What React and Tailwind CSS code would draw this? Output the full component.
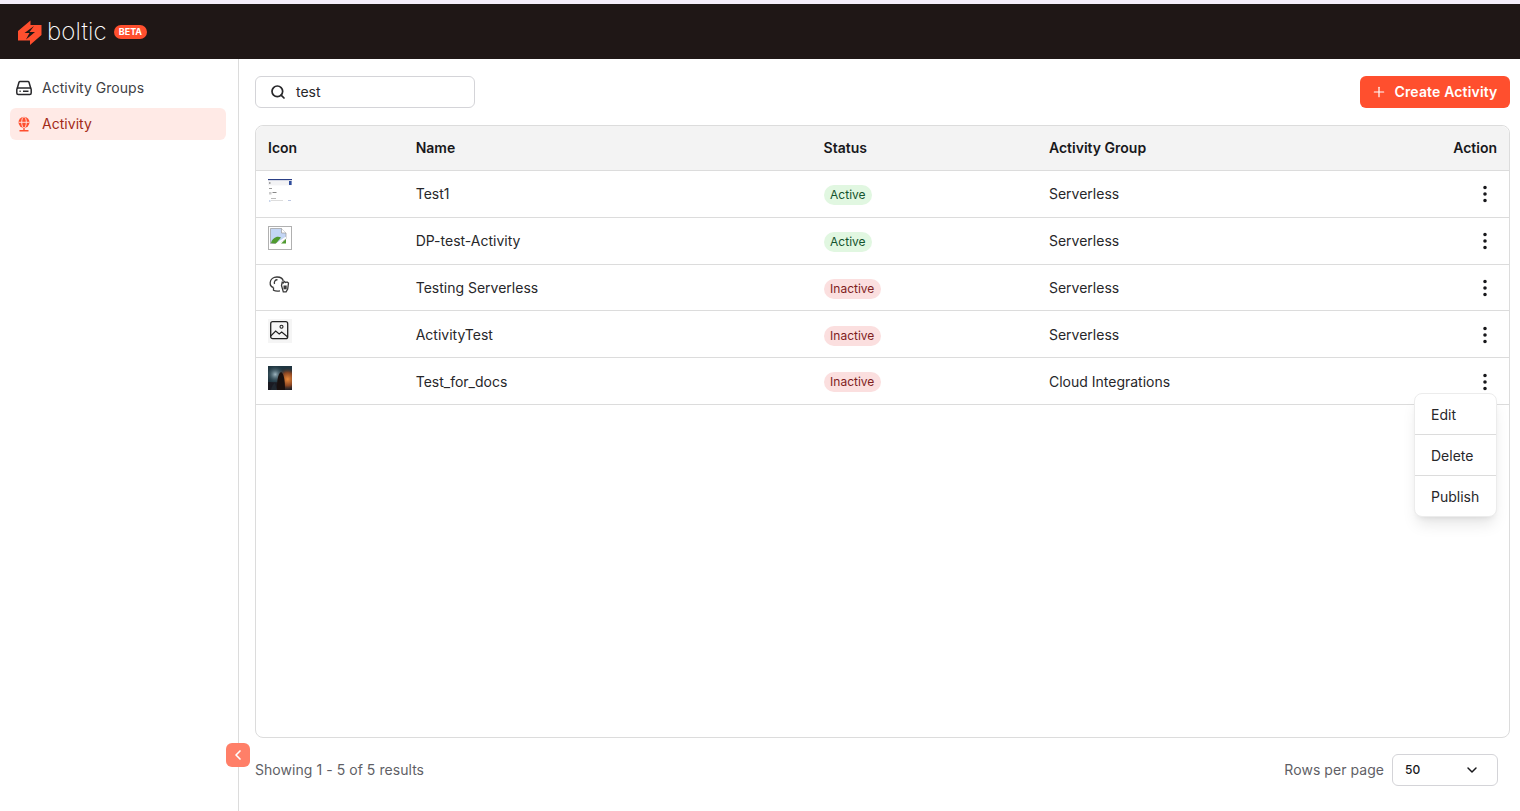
import React from "react";
import { Search, Plus, ChevronDown, ChevronLeft, EllipsisVertical } from "lucide-react";

const rows = [
  { name: "Test1", status: "Active", group: "Serverless", icon: <ThumbShot /> },
  { name: "DP-test-Activity", status: "Active", group: "Serverless", icon: <ThumbBroken /> },
  { name: "Testing Serverless", status: "Inactive", group: "Serverless", icon: <ThumbHead /> },
  { name: "ActivityTest", status: "Inactive", group: "Serverless", icon: <ThumbImage /> },
  { name: "Test_for_docs", status: "Inactive", group: "Cloud Integrations", icon: <ThumbDark /> },
];

function ThumbShot() {
  return (
    <svg width="24" height="24" viewBox="0 0 24 24">
      <rect width="24" height="24" fill="#fff" />
      <rect x="0" y="0" width="24" height="1.4" fill="#2b3f86" />
      <rect x="0" y="1.4" width="24" height="5" fill="#f3f3f5" />
      <rect x="21" y="2" width="2.6" height="4" fill="#2f4d9c" />
      <rect x="1" y="3.5" width="1.5" height="1" fill="#555" />
      <rect x="1" y="9" width="3" height="1" fill="#999" />
      <rect x="1" y="13" width="2.5" height="2.5" fill="#ccc" />
      <rect x="4.5" y="13" width="4" height="1" fill="#888" />
      <rect x="3" y="19" width="5" height="1" fill="#bbb" />
      <rect x="3" y="21" width="12" height="1" fill="#ddd" />
      <rect x="1" y="21" width="1.5" height="2" fill="#c9d5ea" />
      <rect x="20" y="21" width="3" height="1" fill="#bcc6e0" />
    </svg>
  );
}

function ThumbBroken() {
  return (
    <svg width="24" height="24" viewBox="0 0 24 24">
      <rect x="0.5" y="0.5" width="23" height="23" fill="#fff" stroke="#b0b0b0" />
      <path d="M2.500 2.500h11l4.500 4.500v6l-9 4.500H2.500z" fill="#c3d6f5" stroke="#9a9a9a" strokeWidth="0.7" />
      <path d="M13.500 2.500v4.500h4.500" fill="#fff" stroke="#9a9a9a" strokeWidth="0.7" />
      <path d="M3 17c1.500-5 6-7.500 10-5.500l-5 6z" fill="#4f9a2f" />
      <path d="M13 17.500l5-4.500v4.500z" fill="#4f9a2f" />
      <path d="M8 18.500l10-7" stroke="#fff" strokeWidth="1.600" />
    </svg>
  );
}

function ThumbHead() {
  return (
    <svg width="24" height="24" viewBox="0 0 24 24" fill="none" stroke="#3a3a3a" strokeWidth="1.300">
      <path d="M5.500 15.500C3.500 15 2 13 2.200 10.500 2.400 7 5.500 5 9 5c3.500 0 6 2 6.300 4.500" />
      <path d="M5.500 15.500v2.800c1.500.8 4 1 6.500.6" />
      <path d="M6.500 12c-.8-2.500 1-4.500 3-4.200" />
      <path d="M13.500 13.500l.7-3.200 1.300.6.800-1.400 1.400 1 1.300-.6 1.500 1.200-.8 6-1.600 2.800h-2.800z" fill="#fff" />
      <path d="M15.500 13.500h3.200v3.800h-3.200z" fill="#3a3a3a" stroke="none" />
    </svg>
  );
}

function ThumbImage() {
  return (
    <svg width="24" height="24" viewBox="0 0 24 24" fill="none">
      <rect width="24" height="24" fill="#f5f5f5" />
      <rect x="2.700" y="2.700" width="17" height="17" rx="2" stroke="#222" strokeWidth="1.300" />
      <circle cx="13.500" cy="7.700" r="1.500" stroke="#222" strokeWidth="1.100" />
      <path d="M2.700 17l5-5 3.500 3 2.500-2 6 5" stroke="#222" strokeWidth="1.100" />
    </svg>
  );
}

function ThumbDark() {
  return (
    <svg width="24" height="24" viewBox="0 0 24 24">
      <defs>
        <radialGradient id="fire" cx="0.82" cy="0.55" r="0.5">
          <stop offset="0" stopColor="#e8893a" />
          <stop offset="0.55" stopColor="#8a4522" />
          <stop offset="1" stopColor="#24303a" stopOpacity="0" />
        </radialGradient>
        <radialGradient id="glow" cx="0.3" cy="0.35" r="0.4">
          <stop offset="0" stopColor="#9fb6c0" />
          <stop offset="1" stopColor="#24404c" stopOpacity="0" />
        </radialGradient>
      </defs>
      <rect width="24" height="24" fill="#1f3540" />
      <rect y="16" width="24" height="8" fill="#1a1a22" />
      <rect width="24" height="24" fill="url(#fire)" />
      <rect width="24" height="24" fill="url(#glow)" />
      <path d="M9 24c0-8 .5-16 4-18 3 1 4 9 4 18z" fill="#1a100e" />
      <path d="M3 24c1-4 2-6 4-7l2 7z" fill="#20272f" />
    </svg>
  );
}

function StatusBadge({ status }) {
  const active = status === "Active";
  return (
    <span
      className={
        "inline-flex h-5 items-center rounded-full px-[6.500px] text-xs " +
        (active ? "bg-[#e1f7e1] text-[#14532d]" : "bg-[#fbdfdf] text-[#7f1d1d]")
      }
    >
      {status}
    </span>
  );
}

export default function App() {
  return (
    <div
      className="flex h-[811px] w-[1520px] flex-col overflow-hidden bg-white text-[#27272a]"
      style={{ fontFamily: "Inter, 'Liberation Sans', sans-serif" }}
    >
      <div className="h-1 bg-[#f4eefa]" />
      <header className="flex h-[55px] items-center bg-[#1f1716] pl-[17px]">
        <svg width="25" height="25" viewBox="0 0 25 25" className="mt-[1px]">
          <path d="M13.500 0.500V5H24.500V15L13 25V20.500H1V11z" fill="#ff4f2e" />
          <path d="M17 6L7.500 13H12.500L9 19.500L18 12H12.500z" fill="#1f1716" />
        </svg>
        <span className="ml-[5px] text-[24px] leading-none font-extralight tracking-[0.1px] text-white">boltic</span>
        <span className="ml-[7px] flex h-[14px] items-center rounded-full bg-[#ff4f2e] px-[5px] text-[9px] font-bold text-white">
          BETA
        </span>
      </header>

      <div className="flex min-h-0 flex-1">
        <aside className="relative w-[239px] shrink-0 border-r border-[#dcdcdc] pt-[13px] pr-3 pl-[10px]">
          <div className="flex h-8 items-center gap-[10px] px-[6px] text-sm tracking-[0.03px] text-[#3f3f46]">
            <svg width="16" height="16" viewBox="0 0 16 16" fill="none" stroke="#27272a" strokeWidth="1.500">
              <path d="M1.200 8.500L3 2.300a1.200 1.200 0 0 1 1.100-.8h7.800a1.200 1.200 0 0 1 1.100.8l1.800 6.200" />
              <rect x="0.800" y="8" width="14.400" height="6.500" rx="1.500" />
              <path d="M3.500 11.200h1.200M7 11.200h5.500" strokeWidth="1.600" />
            </svg>
            Activity Groups
          </div>
          <div className="mt-1 flex h-8 items-center gap-[10px] rounded-md bg-[#ffeae6] px-[6px] text-sm tracking-[0.03px] text-[#a32a17]">
            <svg width="16" height="16" viewBox="0 0 16 16" fill="none">
              <circle cx="8" cy="6.300" r="5.500" fill="#ff4f2e" />
              <g stroke="#ffeae6" strokeWidth="0.900">
                <ellipse cx="8" cy="6.300" rx="2.300" ry="5.500" />
                <path d="M2.500 6.300h11" />
              </g>
              <path d="M8 11.800v2.500M3.500 14.800h9" stroke="#ff4f2e" strokeWidth="1.400" />
            </svg>
            Activity
          </div>
          <button className="absolute top-[684px] right-[-12px] flex h-6 w-6 items-center justify-center rounded-md bg-[#ff7f68] text-white">
            <ChevronLeft size={16} strokeWidth={2.500} />
          </button>
        </aside>

        <main className="flex min-w-0 flex-1 flex-col pt-[17px] pr-[10px] pl-4">
          <div className="flex items-center justify-between">
            <div className="flex h-8 w-[220px] items-center gap-[10px] rounded-md border border-[#d4d4d8] pl-[14px] text-sm text-[#27272a]">
              <Search size={16} strokeWidth={2.600} className="text-[#27272a]" />
              test
            </div>
            <button className="flex h-8 w-[150px] items-center justify-center gap-2 rounded-md bg-[#ff4f2e] pr-[2px] text-sm font-semibold tracking-[0.15px] text-white">
              <Plus size={16} strokeWidth={1.800} />
              Create Activity
            </button>
          </div>

          <div className="relative mt-[17px] flex h-[613px] flex-col rounded-lg border border-[#dcdcdc]">
            <div className="grid h-[45px] shrink-0 grid-cols-[147.700px_407.900px_225.400px_1fr_auto] items-center rounded-t-lg border-b border-[#dcdcdc] bg-[#f3f3f3] px-3 text-sm font-semibold text-[#18181b]">
              <div>Icon</div>
              <div>Name</div>
              <div>Status</div>
              <div>Activity Group</div>
              <div>Action</div>
            </div>
            {rows.map((r) => (
              <div
                key={r.name}
                className="grid h-[46.800px] shrink-0 grid-cols-[147.700px_407.900px_225.400px_1fr_auto] items-center border-b border-[#dcdcdc] px-3 pt-[1px] text-sm text-[#27272a]"
              >
                <div className="-mt-[7px] h-6 w-6">{r.icon}</div>
                <div>{r.name}</div>
                <div className="mt-[0.800px]"><StatusBadge status={r.status} /></div>
                <div>{r.group}</div>
                <div className="flex w-6 justify-center text-[#18181b]">
                  <EllipsisVertical size={22} strokeWidth={1.900} />
                </div>
              </div>
            ))}
            <div className="absolute top-[267px] right-[12px] w-[83px] rounded-lg border border-[#ececec] bg-white text-sm text-[#27272a] shadow-lg">
              <div className="flex h-[41px] items-center border-b border-[#dcdcdc] px-4 pt-[1px]">Edit</div>
              <div className="flex h-[41px] items-center border-b border-[#dcdcdc] px-4 pt-[1px]">Delete</div>
              <div className="flex h-[40px] items-center px-4 pt-[1px]">Publish</div>
            </div>
          </div>

          <div className="mt-4 flex h-8 items-center justify-between pr-3 text-sm tracking-[0.05px] text-[#5f5f66]">
            <div>Showing 1 - 5 of 5 results</div>
            <div className="flex items-center gap-2">
              Rows per page
              <div className="flex h-8 w-[106px] items-center justify-between rounded-md border border-[#d4d4d8] pr-[17px] pl-3 text-xs font-medium text-[#18181b]">
                50
                <ChevronDown size={16} strokeWidth={2.200} />
              </div>
            </div>
          </div>
        </main>
      </div>
    </div>
  );
}
